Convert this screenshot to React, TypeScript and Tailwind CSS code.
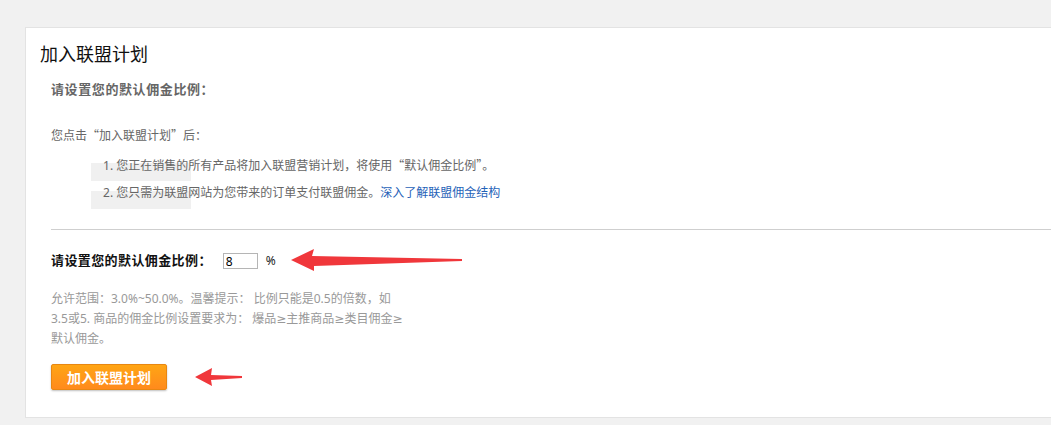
const FONT = "font-['Noto_Sans','Noto_Sans_CJK_SC',sans-serif]";
const CJK = "font-['Noto_Sans_CJK_SC',sans-serif]";

function Arrow({ className, points, w, h }: { className: string; points: string; w: number; h: number }) {
  return (
    <svg width={w} height={h} viewBox={`0 0 ${w} ${h}`} className={className}>
      <polygon points={points} fill="#f0373b" />
    </svg>
  );
}

function Step({ n, children }: { n: number; children: React.ReactNode }) {
  return (
    <li className="relative h-[28px] flex items-start">
      {/* light grey block sitting under the start of each step */}
      <div className="absolute left-[40px] top-[7px] w-[100px] h-[18px] bg-[#f0f0f0]" />
      <span className="relative pl-[52px] leading-[18px]">
        {n}. {children}
      </span>
    </li>
  );
}

const Ge = () => <span className="font-['DejaVu_Sans',sans-serif]">≥</span>;

export default function App() {
  return (
    <div className={`w-[1051px] h-[425px] bg-[#f1f1f1] pt-[27px] pl-[25px] overflow-hidden ${FONT}`}>
      <div className="w-[1040px] h-[391px] bg-white border border-[#e3e3e3]">
        <h1 className="pl-[14px] pt-[14px] text-[18px] leading-[24px] text-[#111]">加入联盟计划</h1>

        <div className="pl-[25px]">
          <h2 className="mt-[14px] text-[13px] leading-[18px] font-bold tracking-[0.6px] text-[#666]">请设置您的默认佣金比例：</h2>

          <p className={`mt-[28px] text-[12px] leading-[18px] text-[#666] ${CJK}`}>您点击“加入联盟计划”后：</p>

          <ul className="mt-[12px] text-[12px] text-[#666]">
            <Step n={1}>
              您正在销售的所有产品将加入联盟营销计划，将使用<span className={CJK}>“默认佣金比例”。</span>
            </Step>
            <Step n={2}>
              您只需为联盟网站为您带来的订单支付联盟佣金。
              <a className="text-[#1f62b8]">深入了解联盟佣金结构</a>
            </Step>
          </ul>

          <div className="mt-[17px] h-px bg-[#cfcfcf]" />

          <div className="mt-[21px] flex items-center h-[20px]">
            <span className="text-[13px] font-bold tracking-[0.4px] text-[#111]">请设置您的默认佣金比例：</span>
            <input
              defaultValue="8"
              className="ml-[11px] w-[35px] h-[16px] border border-[#b5b5b5] px-[2px] text-[12px] leading-[14px] text-[#000] outline-none"
            />
            <span className="ml-[8px] text-[12px] text-[#222]">%</span>
            <Arrow className="ml-[14px]" w={175} h={24} points="1,11 24,0 22,7 172,10 172,12 24,17 24,22" />
          </div>

          <p className="mt-[18px] text-[12px] leading-[20px] text-[#999]">
            允许范围：3.0%~50.0%。温馨提示： 比例只能是0.5的倍数，如
            <br />
            3.5或5. 商品的佣金比例设置要求为： 爆品<Ge />主推商品<Ge />类目佣金<Ge />
            <br />
            默认佣金。
          </p>

          <div className="mt-[15px] flex items-center">
            <button className="w-[116px] h-[26px] rounded-[2px] border border-[#e88712] bg-gradient-to-b from-[#ffa514] to-[#ff8a1c] text-white text-[14px] font-bold shadow-[0_1px_2px_rgba(0,0,0,0.25)]">
              加入联盟计划
            </button>
            <Arrow className="ml-[27px]" w={50} h={18} points="1,9 18,0 17,7 48,8 48,10 17,12 18,18" />
          </div>
        </div>
      </div>
    </div>
  );
}
